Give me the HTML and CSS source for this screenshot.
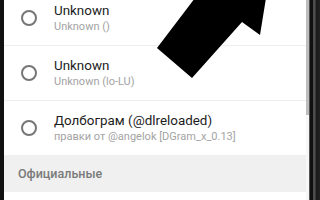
FILE: index.html
```html
<!DOCTYPE html>
<html>
<head>
<meta charset="utf-8">
<link rel="stylesheet" href="styles.css">
</head>
<body>
<div class="screen">
  <div class="frame-left"></div>
  <div class="content">
    <div class="list">
      <div class="row divided">
        <span class="radio"></span>
        <div class="texts">
          <div class="title">Unknown</div>
          <div class="sub">Unknown ()</div>
        </div>
      </div>
      <div class="row divided">
        <span class="radio"></span>
        <div class="texts">
          <div class="title">Unknown</div>
          <div class="sub">Unknown (lo-LU)</div>
        </div>
      </div>
      <div class="row">
        <span class="radio"></span>
        <div class="texts">
          <div class="title">Долбограм (@dlreloaded)</div>
          <div class="sub">правки от @angelok [DGram_x_0.13]</div>
        </div>
      </div>
      <div class="section">Официальные</div>
    </div>
  </div>
  <div class="track"><div class="thumb"></div></div>
  <div class="frame-right"></div>
  <svg class="arrow" width="320" height="200" viewBox="0 0 320 200">
    <polygon points="195,-2 157,48 192,78 242,22 260,35 266,-2" fill="#000"/>
  </svg>
</div>
</body>
</html>
```
FILE: styles.css
```css
html, body {
  margin: 0;
  padding: 0;
  width: 320px;
  height: 200px;
  overflow: hidden;
  background: #fff;
  font-family: Roboto, "Noto Sans", sans-serif;
}
.screen {
  position: relative;
  display: flex;
  width: 320px;
  height: 200px;
  overflow: hidden;
}
.frame-left {
  width: 4px;
  background: #111;
  flex: none;
}
.content {
  flex: 1;
  background: #fff;
  overflow: hidden;
}
.list {
  margin-top: -9px;
}
.row {
  display: flex;
  align-items: center;
  height: 54px;
}
.row.divided {
  border-bottom: 1px solid #eeeeee;
}
.radio {
  flex: none;
  box-sizing: border-box;
  width: 16px;
  height: 16px;
  margin-left: 17px;
  margin-right: 17px;
  border: 2px solid #767676;
  border-radius: 50%;
}
.texts {
  display: flex;
  flex-direction: column;
  gap: 1px;
}
.title {
  font-size: 13.4px;
  line-height: 16px;
  color: #1c1c1c;
  white-space: nowrap;
}
.sub {
  font-size: 11px;
  line-height: 14px;
  color: #a3a3a3;
  white-space: nowrap;
}
.section {
  height: 37px;
  line-height: 37px;
  background: #eff0ef;
  padding-left: 14px;
  font-size: 12.5px;
  font-weight: 500;
  color: #7a7a7a;
}
.track {
  width: 3px;
  flex: none;
  background: #f7f7f7;
}
.thumb {
  height: 115px;
  background: #bdbdbd;
}
.frame-right {
  width: 11px;
  flex: none;
  background: linear-gradient(to right, #555 0, #555 1px, #111 1px, #111 4px, #444 4px, #555 6px, #1a1a1a 7px, #222 11px);
}
.arrow {
  position: absolute;
  left: 0;
  top: 0;
}
```
